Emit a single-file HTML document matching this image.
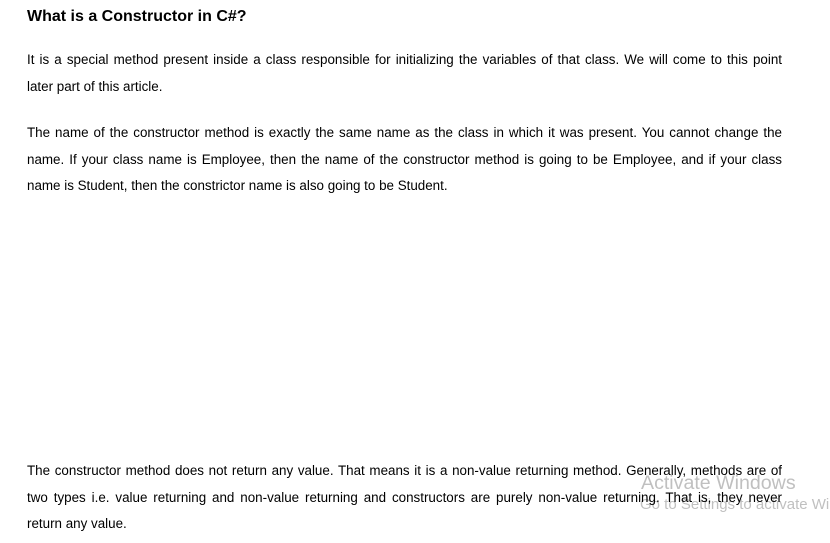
<!DOCTYPE html>
<html><head><meta charset="utf-8"><style>
body{margin:0;background:#fff;width:830px;height:543px;overflow:hidden;position:relative;font-family:"Liberation Sans",Arial,sans-serif;color:#000}
h1{position:absolute;left:27px;top:7px;margin:0;font-size:16px;font-weight:bold;line-height:20px}
.l{position:absolute;left:27px;width:755px;font-size:13.4px;line-height:16px;white-space:nowrap;text-align:justify;text-align-last:justify}
.e{text-align-last:left}
.w1{position:absolute;left:641px;top:472px;font-size:19.6px;color:#c0c0c0;white-space:nowrap}
.w2{position:absolute;left:640px;top:496px;font-size:15px;color:#c0c0c0;white-space:nowrap}
</style></head><body>
<h1>What is a Constructor in C#?</h1>
<div class="l" style="top:52px">It is a special method present inside a class responsible for initializing the variables of that class. We will come to this point</div>
<div class="l e" style="top:79px">later part of this article.</div>
<div class="l" style="top:125px">The name of the constructor method is exactly the same name as the class in which it was present. You cannot change the</div>
<div class="l" style="top:152px">name. If your class name is Employee, then the name of the constructor method is going to be Employee, and if your class</div>
<div class="l e" style="top:178px">name is Student, then the constrictor name is also going to be Student.</div>
<div class="w1">Activate Windows</div>
<div class="w2">Go to Settings to activate Wi</div>
<div class="l" style="top:463px">The constructor method does not return any value. That means it is a non-value returning method. Generally, methods are of</div>
<div class="l" style="top:490px">two types i.e. value returning and non-value returning and constructors are purely non-value returning. That is, they never</div>
<div class="l e" style="top:516px">return any value.</div>
</body></html>
